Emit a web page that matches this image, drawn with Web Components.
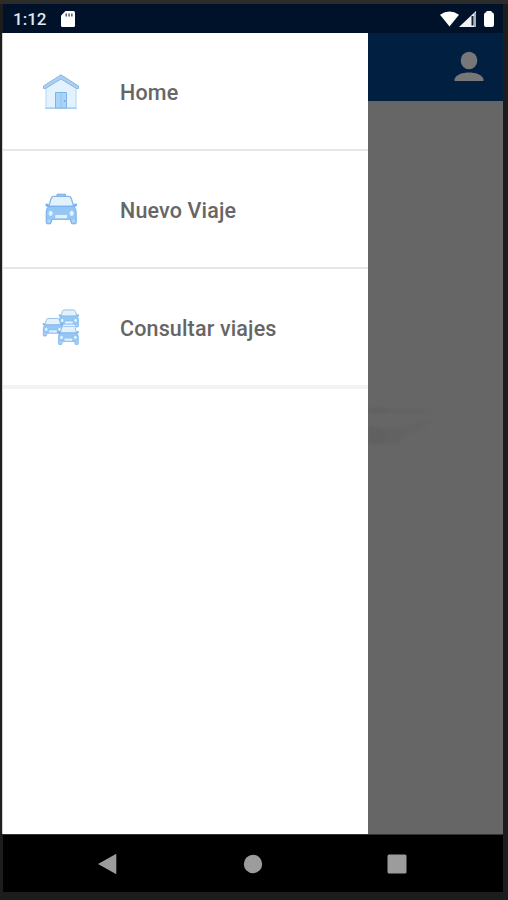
<!DOCTYPE html>
<html lang="es">
<head>
<meta charset="utf-8">
<meta name="viewport" content="width=device-width, initial-scale=1">
<title>Viajes</title>
<style>
body {
    margin: 0;
    background: #1d1d1e;
    font-family: Roboto, "Liberation Sans", sans-serif;
}
</style>
</head>
<body>
<phone-frame>
    <status-bar slot="status" time="1:12"></status-bar>
    <nav-drawer slot="drawer">
        <drawer-item icon="home">Home</drawer-item>
        <drawer-item icon="taxi">Nuevo Viaje</drawer-item>
        <drawer-item icon="fleet">Consultar viajes</drawer-item>
    </nav-drawer>
    <app-page slot="page"></app-page>
    <system-nav slot="nav"></system-nav>
</phone-frame>

<script>
// one front view of a car, shared by the taxi and the fleet icons
const carShape = `
    <path d="M4.500 12 L7 4 Q7.600 2 9.500 2 H24.500 Q26.400 2 27 4 L29.500 12Z" fill="#e3f1fd" stroke="#86b6e6" stroke-width="1.3"/>
    <path d="M.8 9.500h3.500v3H2zM33.200 9.500h-3.500v3H32z" fill="#75b1ec"/>
    <path d="M4.500 12 H29.500 Q32 14.500 32 18 V28.500 Q32 29.500 31 29.500 H27.500 L26 25 H8 L6.500 29.500 H3 Q2 29.500 2 28.500 V18 Q2 14.500 4.500 12Z" fill="#94c7f6" stroke="#74afe9"/>
    <path d="M10.500 20 H23.500 V24.500 H10.500Z" fill="#e1f0fe" stroke="#84baf0" stroke-width=".8"/>
    <ellipse cx="6.500" cy="19" rx="2" ry="2.600" fill="#e5f3ff"/>
    <ellipse cx="27.500" cy="19" rx="2" ry="2.600" fill="#e5f3ff"/>
    <path d="M3.500 25.500h2.500v2.500H3.500zM28 25.500h2.500v2.500H28z" fill="#b5d9fa"/>
`;

const icons = {
    home: `
        <path d="M4 14 L19 4.500 L34 14 V35 H4Z" fill="#e3f2ff" stroke="#b0d5f6"/>
        <path d="M1.500 13 L19 1.800 L36.500 13 V15.500 H34.500 L19 6 L3.500 15.500 H1.500Z" fill="#a9cff2" stroke="#86b0da" stroke-width=".9"/>
        <path d="M13.500 19.500 H24.500 V35 H13.500Z" fill="#acd4f9" stroke="#7db4e8"/>
        <path d="M19 20 V35" stroke="#8cbfee" stroke-width=".8"/>
        <circle cx="22.500" cy="28" r=".8" fill="#518fcb"/>
        <path d="M3 35.200H35" stroke="#9ac4ea"/>`,
    taxi: `
        <path d="M15 5.500V3.200h8.500V5.500" fill="#9bc9f2" stroke="#7aacdf"/>
        <g transform="translate(2.200 3.300)">${carShape}</g>`,
    fleet: `
        <g transform="translate(16 -.3) scale(.64 .62)">${carShape}</g>
        <g transform="translate(0 8.200) scale(.64)">${carShape}</g>
        <g transform="translate(15.200 16) scale(.66)">${carShape}</g>`
};

const frameTemplate = document.createElement('template');
frameTemplate.innerHTML = `
<style>
:host {
    display: grid;
    grid-template-columns: 366px 1fr;
    grid-template-rows: 29px 801px 58px;
    box-sizing: border-box;
    width: 508px;
    height: 900px;
    padding: 0 4px 8px 2px;
    border-top: 4px solid #2c2c2a;
    overflow: hidden;
    background: #1d1d1e;
}
</style>
<slot name="status"></slot>
<slot name="drawer"></slot>
<slot name="page"></slot>
<slot name="nav"></slot>
`;

class PhoneFrame extends HTMLElement {
    constructor() {
        super();
        this.attachShadow({ mode: 'open' }).appendChild(frameTemplate.content.cloneNode(true));
    }
}

const statusTemplate = document.createElement('template');
statusTemplate.innerHTML = `
<style>
:host {
    grid-column: 1 / -1;
    display: flex;
    align-items: center;
    box-sizing: border-box;
    margin: 0 1px;
    padding: 1px 8px 0 10px;
    background: #00122a;
    color: #e4e7eb;
    font-size: 17px;
    font-weight: 500;
    line-height: 28px;
}
svg {
    display: block;
}
.card {
    margin-left: 15px;
}
.signals {
    margin-left: auto;
}
</style>
<span id="time"></span>
<svg class="card" width="14" height="16" viewBox="0 0 14 16">
    <path d="M4.500 0H12.500Q14 0 14 1.500V14.500Q14 16 12.500 16H1.500Q0 16 0 14.500V4.500Z" fill="#fff"/>
    <path d="M4.500 2.500h1.500v3H4.500zM7.300 2.500h1.500v3H7.300zM10.100 2.500h1.500v3h-1.500z" fill="#525d6b"/>
</svg>
<svg class="signals" width="56" height="18" viewBox="0 0 56 18">
    <path d="M1 4.800Q10.500-1.800 20 4.800L10.500 16.500Z" fill="#fff"/>
    <path d="M37 1V17H20Z" fill="#f0f1f2"/>
    <path d="M32.500 6H34.500V15.500H32.500Z" fill="#10213a"/>
    <path d="M35 3H37V17H35Z" fill="#aab0b8"/>
    <path d="M47.500 1H52.500V2Q55 2.500 55 4.500V15Q55 17 53 17H47Q45 17 45 15V4.500Q45 2.500 47.500 2Z" fill="#fff"/>
</svg>
`;

class StatusBar extends HTMLElement {
    constructor() {
        super();
        this._shadowRoot = this.attachShadow({ mode: 'open' });
        this._shadowRoot.appendChild(statusTemplate.content.cloneNode(true));
    }

    connectedCallback() {
        this._shadowRoot.querySelector('#time').textContent = this.getAttribute('time');
    }
}

const drawerTemplate = document.createElement('template');
drawerTemplate.innerHTML = `
<style>
:host {
    display: flex;
    flex-direction: column;
    background: #fff;
    border-left: 1px solid #d0d0d0;
    box-sizing: border-box;
}
</style>
<slot></slot>
`;

class NavDrawer extends HTMLElement {
    constructor() {
        super();
        this.attachShadow({ mode: 'open' }).appendChild(drawerTemplate.content.cloneNode(true));
    }
}

const itemTemplate = document.createElement('template');
itemTemplate.innerHTML = `
<style>
:host {
    display: flex;
    align-items: center;
    gap: 40px;
    box-sizing: border-box;
    height: 118px;
    padding: 2px 0 0 39px;
    border-bottom: 2px solid #e6e6e6;
    color: #666;
    font-size: 21.500px;
    font-weight: 500;
    letter-spacing: .15px;
    line-height: 28px;
}
:host(:last-of-type) {
    height: 120px;
    padding-top: 2px;
    border-bottom: 4px solid #f2f2f2;
}
svg {
    display: block;
    flex: none;
}
.label {
    padding-top: 2px;
}
</style>
<svg id="icon" width="38" height="38" viewBox="0 0 38 38" fill="none" stroke-linejoin="round"></svg>
<span class="label"><slot></slot></span>
`;

class DrawerItem extends HTMLElement {
    constructor() {
        super();
        this._shadowRoot = this.attachShadow({ mode: 'open' });
        this._shadowRoot.appendChild(itemTemplate.content.cloneNode(true));
    }

    connectedCallback() {
        this._shadowRoot.querySelector('#icon').innerHTML = icons[this.getAttribute('icon')];
    }
}

// the page behind the open drawer, already dimmed
const pageTemplate = document.createElement('template');
pageTemplate.innerHTML = `
<style>
:host {
    display: flex;
    flex-direction: column;
    background: #666;
    margin-right: 1px;
}
header {
    display: flex;
    justify-content: flex-end;
    align-items: center;
    box-sizing: border-box;
    height: 68px;
    padding-right: 19px;
    background: #011f40;
}
svg {
    display: block;
}
.shade {
    margin-top: 300px;
}
</style>
<header>
    <svg width="30" height="32" viewBox="0 0 30 32" fill="#777">
        <ellipse cx="15" cy="9.500" rx="8.300" ry="8.800"/>
        <path d="M0.500 30V28C2 23.500 9 21.500 15 21.500S28 23.500 29.500 28V30Z"/>
    </svg>
</header>
<svg class="shade" width="70" height="50" viewBox="0 0 70 50">
    <defs>
        <linearGradient id="fade">
            <stop offset="0" stop-color="#606060"/>
            <stop offset="1" stop-color="#656565"/>
        </linearGradient>
        <filter id="soft"><feGaussianBlur stdDeviation="1.500"/></filter>
    </defs>
    <path d="M0 7H64V12H0ZM0 25L18 28L64 19V24L35 35L30 43H0Z" fill="url(#fade)" filter="url(#soft)"/>
</svg>
`;

class AppPage extends HTMLElement {
    constructor() {
        super();
        this.attachShadow({ mode: 'open' }).appendChild(pageTemplate.content.cloneNode(true));
    }
}

const systemNavTemplate = document.createElement('template');
systemNavTemplate.innerHTML = `
<style>
:host {
    grid-column: 1 / -1;
    display: flex;
    align-items: center;
    justify-content: space-between;
    box-sizing: border-box;
    margin: 0 1px;
    padding: 0 96px 0 95px;
    border-top: 1px solid #333;
    background: #000;
}
svg {
    display: block;
}
</style>
<svg width="20" height="22" viewBox="0 0 20 22"><path d="M0 11L18.300 .8V21.200Z" fill="#9c9c9c"/></svg>
<svg width="20" height="20" viewBox="0 0 20 20"><circle cx="10" cy="10" r="9.200" fill="#9c9c9c"/></svg>
<svg width="20" height="20" viewBox="0 0 20 20"><rect x=".5" y=".5" width="19" height="19" rx="1.500" fill="#9c9c9c"/></svg>
`;

class SystemNav extends HTMLElement {
    constructor() {
        super();
        this.attachShadow({ mode: 'open' }).appendChild(systemNavTemplate.content.cloneNode(true));
    }
}

customElements.define('phone-frame', PhoneFrame);
customElements.define('status-bar', StatusBar);
customElements.define('nav-drawer', NavDrawer);
customElements.define('drawer-item', DrawerItem);
customElements.define('app-page', AppPage);
customElements.define('system-nav', SystemNav);
</script>
</body>
</html>
